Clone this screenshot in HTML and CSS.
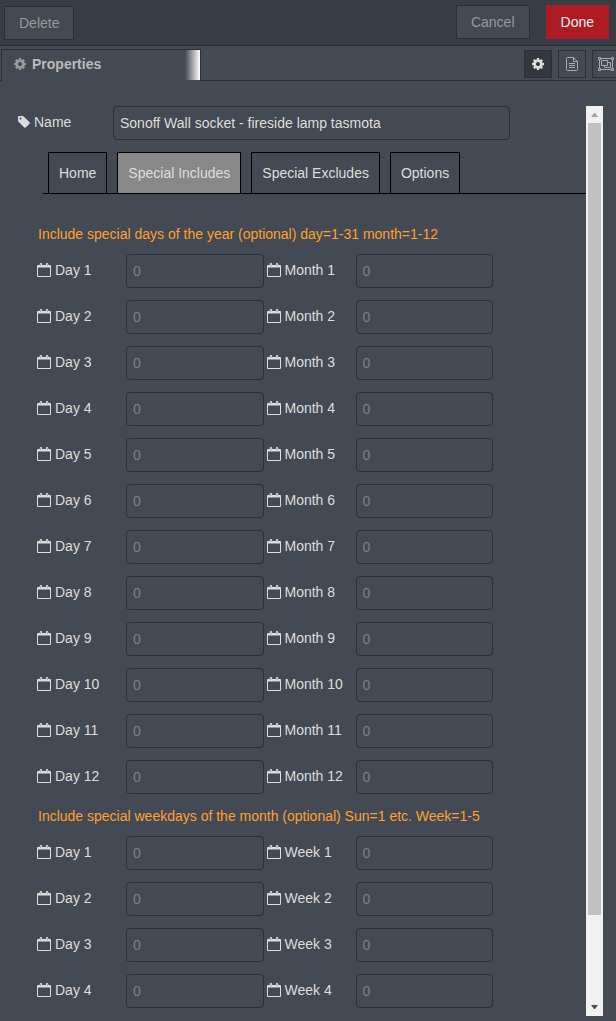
FILE: index.html
```html
<!DOCTYPE html>
<html lang="en">
<head>
    <meta charset="UTF-8">
    <meta name="viewport" content="width=device-width, initial-scale=1.0">
    <title>Edit node</title>
    <link rel="stylesheet" href="styles.css">
</head>
<body>
    <!-- Icon symbols -->
    <svg class="symbols" aria-hidden="true">
        <symbol id="icon-cog" viewBox="128 128 1536 1536">
            <path d="M1152 896q0-106-75-181t-181-75-181 75-75 181 75 181 181 75 181-75 75-181zm512-109v222q0 12-8 23t-20 13l-185 28q-19 54-39 91 35 50 107 138 10 12 10 25t-9 23q-27 37-99 108t-94 71q-12 0-26-9l-138-108q-44 23-91 38-16 136-29 186-7 28-36 28h-222q-14 0-24.5-8.5t-11.5-21.5l-28-184q-49-16-90-37l-141 107q-10 9-25 9-14 0-25-11-126-114-165-168-7-10-7-23 0-12 8-23 15-21 51-66.5t54-70.5q-27-50-41-99l-183-27q-13-2-21-12.5t-8-23.5v-222q0-12 8-23t19-13l186-28q14-46 39-92-40-57-107-138-10-12-10-24 0-10 9-23 26-36 98.5-107.5t94.5-71.5q13 0 26 10l138 107q44-23 91-38 16-136 29-186 7-28 36-28h222q14 0 24.5 8.5t11.5 21.5l28 184q49 16 90 37l142-107q9-9 24-9 13 0 25 10 129 119 165 170 7 8 7 22 0 12-8 23-15 21-51 66.5t-54 70.5q26 50 41 98l183 28q13 2 21 12.5t8 23.5z"/>
        </symbol>
        <symbol id="icon-tag" viewBox="128 128 1536 1536">
            <path d="M576 448q0-53-37.5-90.5t-90.5-37.5-90.5 37.5-37.5 90.5 37.5 90.5 90.5 37.5 90.5-37.5 37.5-90.5zm1067 576q0 53-37 90l-491 492q-39 37-91 37-53 0-90-37l-715-716q-38-37-64.5-101t-26.5-117v-416q0-52 38-90t90-38h416q53 0 117 26.5t102 64.5l715 714q37 39 37 91z"/>
        </symbol>
        <symbol id="icon-calendar" viewBox="0 0 14 14">
            <path fill-rule="evenodd" d="M1 2h1.700V1q0-1 1.200-1t1.200 1v1h3.800V1q0-1 1.200-1t1.200 1v1H13q1 0 1 1v10q0 1-1 1H1q-1 0-1-1V3q0-1 1-1zM1 4.500V13h12V4.500zM3.700 1v2h.4V1zM9.900 1v2h.4V1z"/>
        </symbol>
        <symbol id="icon-file" viewBox="0 0 12 14">
            <path fill="none" stroke="currentColor" d="M1.500.5h6l4 4v8q0 1-1 1h-9q-1 0-1-1v-11q0-1 1-1zM7.500.5v4h4M3 6.500h6M3 8.500h6M3 10.500h6"/>
        </symbol>
        <symbol id="icon-group" viewBox="0 0 16 14">
            <path fill="none" stroke="currentColor" d="M2.500 1.500h11M2.500 12.500h11M1.500 2.500v9M14.500 2.500v9M.5.5h2v2h-2zM13.500.5h2v2h-2zM.5 11.500h2v2h-2zM13.500 11.500h2v2h-2zM3.500 3.500h6v5h-6zM9.500 5.500h3v5h-6v-2"/>
        </symbol>
    </svg>

    <header class="toolbar">
        <button class="btn btn-delete">Delete</button>
        <button class="btn btn-cancel">Cancel</button>
        <button class="btn btn-primary">Done</button>
    </header>

    <div class="tray-header">
        <div class="tray-tab">
            <svg class="icon icon-small"><use href="#icon-cog"/></svg>
            <span>Properties</span>
        </div>
        <div class="tray-buttons">
            <button class="icon-btn selected" aria-label="Properties"><svg class="icon icon-small"><use href="#icon-cog"/></svg></button>
            <button class="icon-btn" aria-label="Description"><svg class="icon"><use href="#icon-file"/></svg></button>
            <button class="icon-btn" aria-label="Appearance"><svg class="icon icon-wide"><use href="#icon-group"/></svg></button>
        </div>
    </div>

    <main class="editor">
        <form class="form">
            <div class="name-row">
                <label for="name"><svg class="icon icon-small"><use href="#icon-tag"/></svg>Name</label>
                <input type="text" id="name" value="Sonoff Wall socket - fireside lamp tasmota">
            </div>

            <nav class="tabs">
                <a href="#home">Home</a>
                <a href="#includes" class="active">Special Includes</a>
                <a href="#excludes">Special Excludes</a>
                <a href="#options">Options</a>
            </nav>

            <section class="fields">
                <h2>Include special days of the year (optional) day=1-31 month=1-12</h2>
                <div id="days"></div>
                <h2>Include special weekdays of the month (optional) Sun=1 etc. Week=1-5</h2>
                <div id="weekdays"></div>
            </section>
        </form>

        <div class="scrollbar" aria-hidden="true">
            <svg class="arrow arrow-up" viewBox="0 0 17 17"><path d="M5 11h7L9 7H8z"/></svg>
            <div class="track"><div class="thumb"></div></div>
            <svg class="arrow arrow-down" viewBox="0 0 17 17"><path d="M5 6h7L9 10H8z"/></svg>
        </div>
    </main>

    <script src="script.js"></script>
</body>
</html>
```
FILE: styles.css
```css
* {
    margin: 0;
    padding: 0;
    box-sizing: border-box;
}

body {
    font-family: "Liberation Sans", Arial, sans-serif;
    font-size: 14px;
    line-height: 20px;
    color: #ddd;
    background: #434a54;
    overflow-x: hidden;
}

button,
input {
    font: inherit;
}

.symbols {
    display: none;
}

.icon {
    width: 14px;
    height: 14px;
    fill: currentColor;
    flex: none;
}

.icon-small {
    width: 12px;
    height: 12px;
}

.icon-wide {
    width: 16px;
}

/* Top toolbar */
.toolbar {
    display: flex;
    align-items: flex-start;
    padding: 5px 7px 5px 4px;
    background: #383c45;
    border-bottom: 1px solid #2b2f38;
}

.btn {
    height: 34px;
    padding: 0 14px;
    color: #999;
    background: #434a54;
    border: 1px solid #2b2f38;
    white-space: nowrap;
}

.btn-delete {
    margin-top: 1px;
}

.btn-cancel {
    margin-left: auto;
}

.btn-primary {
    margin-left: 16px;
    color: #eee;
    background: #ad1c24;
    border-color: #ad1c24;
}

/* Tray header */
.tray-header {
    display: flex;
    align-items: flex-end;
    height: 35px;
    padding-left: 1px;
    border-bottom: 1px solid #2b2f38;
}

.tray-tab {
    display: flex;
    align-items: center;
    gap: 6px;
    width: 200px;
    height: 32px;
    margin-bottom: -1px;
    padding: 0 0 4px 12px;
    font-weight: bold;
    color: #bbb;
    background: linear-gradient(to right, transparent, #fff) right top / 15px 30px no-repeat #434a54;
    border: 1px solid #2b2f38;
    border-bottom: none;
}

.tray-tab .icon {
    color: #999;
}

.tray-buttons {
    display: flex;
    gap: 6px;
    margin-left: auto;
    margin-right: -4px;
    padding-bottom: 2px;
}

.icon-btn {
    display: flex;
    align-items: center;
    justify-content: center;
    width: 28px;
    height: 28px;
    color: #aaa;
    background: #434a54;
    border: 1px solid #2b2f38;
}

.icon-btn.selected {
    color: #ddd;
    background: #343740;
}

/* Form */
.editor {
    display: flex;
    padding: 25px 13px 5px 0;
}

.form {
    flex: 1;
    min-width: 0;
}

input {
    width: 100%;
    min-width: 0;
    height: 34px;
    padding: 0 6px;
    color: #ddd;
    background: transparent;
    border: 1px solid #2b2f38;
    border-radius: 4px;
}

input::placeholder {
    color: #808080;
}

label {
    display: flex;
    align-items: center;
    gap: 4px;
    height: 32px;
    white-space: nowrap;
}

.name-row {
    display: grid;
    grid-template-columns: 95px 1fr;
    padding: 0 76px 0 18px;
}

.tabs {
    display: flex;
    gap: 10px;
    margin: 12px 0 30px 43px;
    padding-left: 5px;
    border-bottom: 1px solid #000;
}

.tabs a {
    padding: 10px;
    color: #ddd;
    text-decoration: none;
    border: 1px solid #000;
    border-bottom: none;
    white-space: nowrap;
}

.tabs a.active {
    background: #888;
}

.fields {
    padding: 0 93px 0 37px;
}

.fields h2 {
    margin: 0 -80px 10px 1px;
    font-size: 14px;
    font-weight: normal;
    color: #ffa02f;
}

.field-row {
    display: grid;
    grid-template-columns: 89px 1fr 92px 1fr;
    margin-bottom: 12px;
}

#weekdays .field-row:last-child {
    margin-bottom: 8px;
}

.field-row label + input + label {
    padding-left: 3px;
}

/* Scrollbar */
.scrollbar {
    display: flex;
    flex-direction: column;
    width: 17px;
    background: #f1f1f1;
}

.arrow {
    width: 17px;
    height: 17px;
    flex: none;
}

.arrow-up {
    fill: #a3a3a3;
}

.arrow-down {
    fill: #505050;
}

.track {
    flex: 1;
    padding: 0 2px;
}

.thumb {
    height: 90.4%;
    background: #c1c1c1;
}
```
FILE: script.js
```js
// Build the rows of paired inputs
function addRows(containerId, secondLabel, count) {
    const container = document.getElementById(containerId);
    const icon = '<svg class="icon"><use href="#icon-calendar"/></svg>';

    for (let i = 1; i <= count; i++) {
        const first = `${containerId}-day-${i}`;
        const second = `${containerId}-${secondLabel.toLowerCase()}-${i}`;
        const row = document.createElement('div');
        row.className = 'field-row';
        row.innerHTML = `
            <label for="${first}">${icon}Day ${i}</label>
            <input type="text" id="${first}" placeholder="0">
            <label for="${second}">${icon}${secondLabel} ${i}</label>
            <input type="text" id="${second}" placeholder="0">`;
        container.appendChild(row);
    }
}

addRows('days', 'Month', 12);
addRows('weekdays', 'Week', 4);
```
